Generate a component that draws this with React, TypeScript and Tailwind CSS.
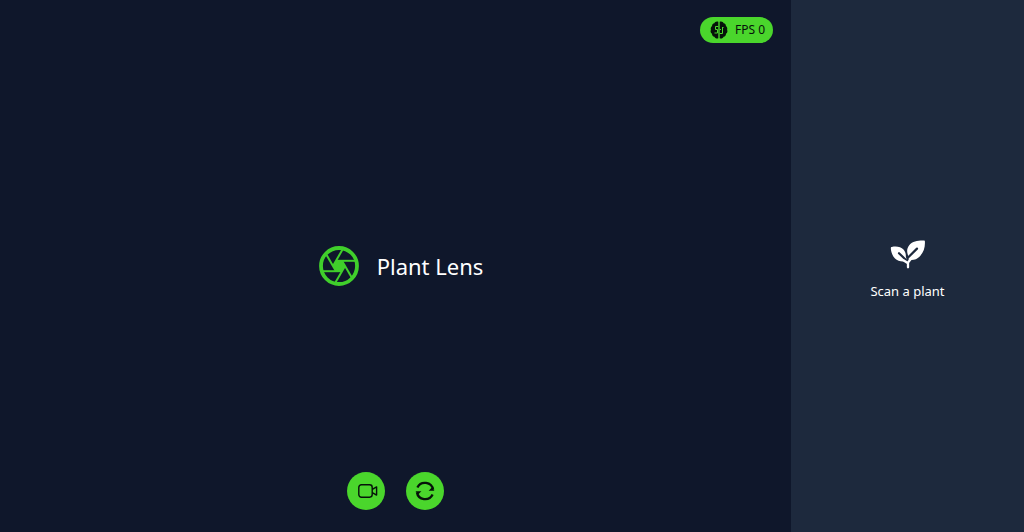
import type { ReactNode } from "react";

const bladeAngles = [0, 60, 120, 180, 240, 300];

function ApertureLogo() {
  return (
    <svg viewBox="-20 -20 40 40" className="size-10 text-[#40cf2b]" aria-hidden="true">
      <circle r="18" fill="none" stroke="currentColor" strokeWidth="3.8" />
      <polygon points="6,0 3,-5.200 -3,-5.200 -6,0 -3,5.200 3,5.200" fill="currentColor" />
      {bladeAngles.map((angle) => (
        <path
          key={angle}
          d="M-3 -5.2H17"
          stroke="currentColor"
          strokeWidth="2"
          transform={`rotate(${angle})`}
        />
      ))}
    </svg>
  );
}

function BrainIcon() {
  return (
    <svg viewBox="0 0 18 18" className="size-[18px]" fill="none" aria-hidden="true">
      <path
        fill="currentColor"
        d="M8.300.8C6.5 0 4.800.9 4.400 2.200 2.900 2.400 1.900 3.600 2.100 5 .9 5.800.4 7.400.9 8.700.2 10.200.6 11.900 2 12.700c-.1 1.600.9 2.800 2.400 3C5 17.300 6.800 18 8.300 17.200zM9.700.8c1.800-.8 3.500.1 3.900 1.400 1.500.2 2.500 1.400 2.300 2.800 1.200.8 1.700 2.400 1.200 3.700.7 1.500.3 3.200-1.100 4 .1 1.600-.9 2.800-2.400 3-.6 1.600-2.400 2.300-3.900 1.500z"
      />
      <g className="stroke-[#4ad62c]" strokeWidth="1">
        <path d="M8.300 5.500H5.500v3h2v3.500H4.500M9.700 12.500H12.500V7M9.700 8.500H11" />
        <path d="M12 6.500h1.500" />
      </g>
    </svg>
  );
}

function CameraIcon() {
  return (
    <svg
      viewBox="0 0 20 14"
      className="h-[14px] w-5"
      fill="none"
      stroke="currentColor"
      strokeWidth="1.400"
      strokeLinejoin="round"
      aria-hidden="true"
    >
      <rect x="0.800" y="0.800" width="13.400" height="12.400" rx="2.600" />
      <path d="M14.300 5.400 18.600 2.900v8.200l-4.300-2.500" />
    </svg>
  );
}

function SwapIcon() {
  return (
    <svg viewBox="0 0 20 20" className="size-5" fill="none" aria-hidden="true">
      <g stroke="currentColor" strokeWidth="2.300">
        <path d="M2.400 6.600A8.300 8.300 0 0 1 18.100 8.800" />
        <path d="M17.600 13.400A8.300 8.300 0 0 1 1.900 11.200" />
      </g>
      <path fill="currentColor" d="M13.600 9.800 16.600 6.800 19.500 9.800zM6.400 10.200 3.400 13.200.5 10.200z" />
    </svg>
  );
}

function PlantIcon() {
  return (
    <svg viewBox="0 0 36 32" className="h-8 w-9" fill="none" aria-hidden="true">
      <path
        fill="currentColor"
        d="M1.800 7.900C6.500 7 11 7.700 13.500 10.600c1.800 2 2.500 4.500 2.300 6.700l1.200 4.500C13.500 23.200 8 22.700 5 19.600 2.400 16.800.9 12.800.8 9c0-.7.300-1 1-1.100z"
      />
      <path
        fill="currentColor"
        d="M33.900 1.600C28 1.400 22.500 2.500 19.400 6 16.800 9 16.600 13 18 16.200l.7 4.500c3.900 1 8-.1 11-3.200 4-4.200 5.500-9.600 5.200-14.900 0-.7-.3-1-1-1z"
      />
      <path
        d="M27 9.600 17.800 18.800M9 14.200 16 21"
        className="stroke-slate-800"
        strokeWidth="2.200"
        strokeLinecap="round"
      />
      <path
        d="M18 28.300v-4.800L21 19.800M18 24.300 13.800 21.500"
        stroke="currentColor"
        strokeWidth="2.300"
        strokeLinecap="round"
        strokeLinejoin="round"
      />
    </svg>
  );
}

function RoundButton({ label, children }: { label: string; children: ReactNode }) {
  return (
    <button
      type="button"
      aria-label={label}
      className="flex size-[38px] items-center justify-center rounded-full bg-[#4ad62c] text-[#06120a]"
    >
      {children}
    </button>
  );
}

export default function App() {
  return (
    <div className="flex min-h-screen bg-slate-900 font-['Noto_Sans',sans-serif] text-white">
      <main className="flex flex-1 flex-col items-center justify-between pt-[17px] pb-[22px]">
        <div className="flex h-[42px] w-full items-start justify-end pr-[18px]">
          <div className="flex h-[26px] items-center gap-[7px] rounded-full bg-[#4ad62c] pr-2 pl-[10px] text-xs text-[#06120a]">
            <BrainIcon />
            <span>FPS 0</span>
          </div>
        </div>
        <div className="flex items-center gap-[18px] pl-[11px]">
          <ApertureLogo />
          <h1 className="text-[22px] leading-8">Plant Lens</h1>
        </div>
        <div className="flex gap-[21px]">
          <RoundButton label="Start camera">
            <span className="pl-1">
              <CameraIcon />
            </span>
          </RoundButton>
          <RoundButton label="Switch camera">
            <SwapIcon />
          </RoundButton>
        </div>
      </main>
      <aside className="flex w-[233px] flex-col items-center justify-center gap-[10px] bg-slate-800 pt-2">
        <PlantIcon />
        <p className="text-[13px] leading-5">Scan a plant</p>
      </aside>
    </div>
  );
}
